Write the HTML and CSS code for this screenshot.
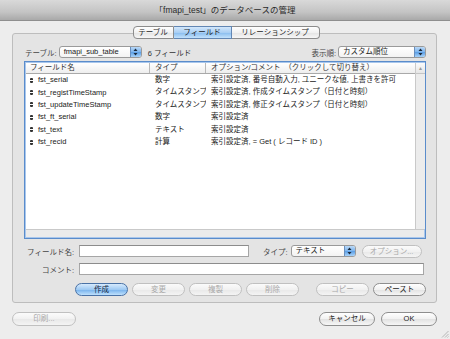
FILE: index.html
```html
<!DOCTYPE html>
<html lang="ja">
<head>
  <meta charset="UTF-8">
  <title>データベースの管理</title>
  <link rel="stylesheet" href="styles.css">
</head>
<body>
  <div class="window">
    <div class="titlebar">「fmapi_test」のデータベースの管理</div>

    <div class="tabs">
      <span class="tab">テーブル</span>
      <span class="tab selected">フィールド</span>
      <span class="tab">リレーションシップ</span>
    </div>

    <div class="box">
      <div class="toolbar">
        <span class="label">テーブル:</span>
        <div class="popup table-popup">
          <span class="popup-text">fmapi_sub_table</span>
          <span class="popup-arrows"><svg width="5" height="8" viewBox="0 0 5 8"><path d="M2.5 0.5 L4.5 3 L0.5 3 Z M2.5 7.5 L4.5 5 L0.5 5 Z" fill="#1b2a3c"/></svg></span>
        </div>
        <span class="count">6 フィールド</span>
        <span class="spacer"></span>
        <span class="label">表示順:</span>
        <div class="popup order-popup">
          <span class="popup-text">カスタム順位</span>
          <span class="popup-arrows"><svg width="5" height="8" viewBox="0 0 5 8"><path d="M2.5 0.5 L4.5 3 L0.5 3 Z M2.5 7.5 L4.5 5 L0.5 5 Z" fill="#1b2a3c"/></svg></span>
        </div>
      </div>

      <div class="list">
        <div class="list-main">
          <div class="rows">
            <div class="row header">
              <span class="col-name">フィールド名</span>
              <span class="col-type">タイプ</span>
              <span class="col-opt">オプション/コメント　（クリックして切り替え）</span>
            </div>
            <div class="row">
              <span class="col-name"><i class="handle"></i>fst_serial</span>
              <span class="col-type">数字</span>
              <span class="col-opt">索引設定済, 番号自動入力, ユニークな値, 上書きを許可</span>
            </div>
            <div class="row">
              <span class="col-name"><i class="handle"></i>fst_registTimeStamp</span>
              <span class="col-type">タイムスタンプ</span>
              <span class="col-opt">索引設定済, 作成タイムスタンプ（日付と時刻）</span>
            </div>
            <div class="row">
              <span class="col-name"><i class="handle"></i>fst_updateTimeStamp</span>
              <span class="col-type">タイムスタンプ</span>
              <span class="col-opt">索引設定済, 修正タイムスタンプ（日付と時刻）</span>
            </div>
            <div class="row">
              <span class="col-name"><i class="handle"></i>fst_ft_serial</span>
              <span class="col-type">数字</span>
              <span class="col-opt">索引設定済</span>
            </div>
            <div class="row">
              <span class="col-name"><i class="handle"></i>fst_text</span>
              <span class="col-type">テキスト</span>
              <span class="col-opt">索引設定済</span>
            </div>
            <div class="row">
              <span class="col-name"><i class="handle"></i>fst_recid</span>
              <span class="col-type">計算</span>
              <span class="col-opt">索引設定済, = Get ( レコード ID )</span>
            </div>
          </div>
          <div class="vscroll">
            <div class="scroll-up">▲</div>
          </div>
        </div>
        <div class="hscroll"></div>
      </div>

      <div class="form-row">
        <span class="form-label">フィールド名:</span>
        <span class="input name-input"></span>
        <span class="label type-label">タイプ:</span>
        <div class="popup type-popup">
          <span class="popup-text">テキスト</span>
          <span class="popup-arrows"><svg width="5" height="8" viewBox="0 0 5 8"><path d="M2.5 0.5 L4.5 3 L0.5 3 Z M2.5 7.5 L4.5 5 L0.5 5 Z" fill="#1b2a3c"/></svg></span>
        </div>
        <span class="btn disabled opt-btn">オプション...</span>
      </div>
      <div class="form-row comment-row">
        <span class="form-label">コメント:</span>
        <span class="input comment-input"></span>
      </div>

      <div class="actions">
        <span class="btn default">作成</span>
        <span class="btn disabled">変更</span>
        <span class="btn disabled">複製</span>
        <span class="btn disabled">削除</span>
        <span class="spacer"></span>
        <span class="btn disabled">コピー</span>
        <span class="btn">ペースト</span>
      </div>
    </div>

    <div class="bottom">
      <span class="btn disabled print-btn">印刷...</span>
      <span class="spacer"></span>
      <span class="btn wide">キャンセル</span>
      <span class="btn wide">OK</span>
    </div>

    <div class="grip">
      <svg width="8" height="8" viewBox="0 0 8 8"><path d="M7.5 1 L1 7.5 M7.5 4 L4 7.5 M7.5 6.5 L6.5 7.5" stroke="#a8a8a8" stroke-width="0.8"/></svg>
    </div>
  </div>
</body>
</html>
```

FILE: styles.css
```css
* {
  box-sizing: border-box;
  margin: 0;
  padding: 0;
}

body {
  width: 450px;
  height: 339px;
  overflow: hidden;
  background: #ededed;
  font-family: "Liberation Sans", "Noto Sans CJK JP", sans-serif;
  font-size: 7.5px;
  color: #222;
  white-space: nowrap;
}

.window {
  position: relative;
  height: 339px;
  display: flex;
  flex-direction: column;
}

.titlebar {
  height: 21px;
  line-height: 20px;
  text-align: center;
  font-size: 8.5px;
  color: #2a2a2a;
  background: linear-gradient(#d9d9d9, #c4c4c4 60%, #a9a9a9);
  border-bottom: 1px solid #8f8f8f;
}

/* segmented tabs over the box border */
.tabs {
  display: flex;
  justify-content: center;
  margin-top: 5px;
  margin-bottom: -6px;
  margin-left: 2px;
  position: relative;
  z-index: 1;
}

.tab {
  height: 13px;
  line-height: 12px;
  text-align: center;
  font-size: 7.5px;
  color: #1e1e1e;
  background: linear-gradient(#ffffff, #f1f1f1 50%, #e3e3e3 51%, #f7f7f7);
  border: 1px solid #8c8c8c;
  border-left: none;
}

.tab:first-child {
  border-left: 1px solid #8c8c8c;
  border-radius: 4px 0 0 4px;
  width: 41px;
}

.tab:last-child {
  border-radius: 0 4px 4px 0;
  width: 88px;
}

.tab.selected {
  width: 58px;
  background: linear-gradient(#d3e7fb, #a9cff4 50%, #86bbee 51%, #c3e2fc);
  border-color: #6286b3;
}

.box {
  margin: 0 13px 0 12px;
  padding: 12px 10px 6px 11px;
  background: #e4e4e4;
  border: 1px solid #bdbdbd;
  border-radius: 3px;
}

.toolbar {
  display: flex;
  align-items: center;
  height: 12px;
}

.label {
  color: #444;
  margin-right: 2px;
}

.toolbar .label:first-child {
  margin-left: 1px;
}

.spacer {
  flex: 1;
}

.popup {
  height: 12px;
  display: flex;
  align-items: stretch;
  background: linear-gradient(#ffffff, #f3f3f3);
  border: 1px solid #9a9a9a;
  border-radius: 3px;
  overflow: hidden;
}

.popup-text {
  flex: 1;
  padding-left: 4px;
  line-height: 10px;
  color: #222;
}

.popup-arrows {
  width: 11px;
  display: flex;
  align-items: center;
  justify-content: center;
  background: linear-gradient(#b9d8f7, #7db5ee 50%, #5a9de4 51%, #a8d3fa);
  border-left: 1px solid #6a8fbd;
}

.table-popup {
  width: 83px;
}

.order-popup {
  width: 88px;
}

.count {
  margin-left: 6px;
  color: #333;
}

/* field list */
.list {
  margin-top: 3px;
  height: 178px;
  display: flex;
  flex-direction: column;
  background: #fff;
  border: 1px solid #5a8ccb;
  box-shadow: inset 0 0 0 1px #a9c7ec;
}

.list-main {
  flex: 1;
  display: flex;
  padding: 1px 0 0 1px;
}

.rows {
  flex: 1;
  background: #fff;
  border-right: 1px solid #c9c9c9;
}

.row {
  display: flex;
  height: 12.4px;
  line-height: 12px;
  color: #222;
}

.row.header {
  height: 11px;
  line-height: 10px;
  color: #333;
  background: linear-gradient(#ffffff, #eeeeee);
  border-bottom: 1px solid #a9a9a9;
}

.col-name {
  width: 124px;
  padding-left: 4px;
  display: flex;
  align-items: center;
}

.col-type {
  width: 56px;
  padding-left: 5px;
  overflow: hidden;
}

.col-opt {
  flex: 1;
  padding-left: 5px;
  overflow: hidden;
}

.header .col-name,
.header .col-type {
  border-right: 1px solid #b8b8b8;
}

.handle {
  width: 3px;
  height: 5px;
  margin-right: 5px;
  background: linear-gradient(#333 0 40%, transparent 40% 60%, #333 60%);
  border-radius: 1px;
}

.vscroll {
  width: 9px;
  background: #ececec;
}

.scroll-up {
  height: 11px;
  font-size: 5px;
  line-height: 11px;
  text-align: center;
  color: #9a9a9a;
  background: linear-gradient(#fbfbfb, #e6e6e6);
  border-bottom: 1px solid #c4c4c4;
}

.hscroll {
  height: 8px;
  background: #ebebeb;
  border-top: 1px solid #c9c9c9;
  margin: 0 1px 1px 1px;
}

/* edit fields */
.form-row {
  display: flex;
  align-items: center;
  margin-top: 6px;
  height: 12px;
}

.comment-row {
  margin-top: 6px;
}

.form-label {
  width: 50px;
  text-align: right;
  color: #444;
  margin-right: 5px;
}

.input {
  height: 12px;
  background: #fff;
  border: 1px solid #a6a6a6;
  border-top-color: #8c8c8c;
}

.name-input {
  width: 170px;
}

.type-label {
  margin-left: 14px;
  margin-right: 3px;
}

.type-popup {
  width: 65px;
}

.opt-btn {
  margin-left: 6px;
  width: 60px;
}

.comment-input {
  flex: 1;
  margin-right: 2px;
}

.btn {
  height: 13px;
  line-height: 11px;
  text-align: center;
  color: #1d1d1d;
  background: linear-gradient(#ffffff, #f1f1f1 50%, #e2e2e2 51%, #f6f6f6);
  border: 1px solid #8e8e8e;
  border-radius: 7px;
}

.btn.disabled {
  color: #a9a9a9;
  border-color: #c0c0c0;
  background: linear-gradient(#fbfbfb, #f1f1f1 50%, #e8e8e8 51%, #f4f4f4);
}

.btn.default {
  color: #10243d;
  border-color: #4a72a6;
  background: linear-gradient(#d6eafd, #9fcaf3 50%, #74b0ec 51%, #bfe1fd);
}

.actions {
  display: flex;
  gap: 4px;
  margin-top: 8px;
  padding-left: 51px;
}

.actions .btn {
  width: 53px;
}

.bottom {
  display: flex;
  gap: 6px;
  margin: 9px 13px 0 12px;
}

.print-btn {
  width: 64px;
  height: 14px;
}

.btn.wide {
  width: 56px;
  height: 14px;
  line-height: 12px;
}

.grip {
  position: absolute;
  right: 1px;
  bottom: 1px;
  width: 8px;
  height: 8px;
}
```
